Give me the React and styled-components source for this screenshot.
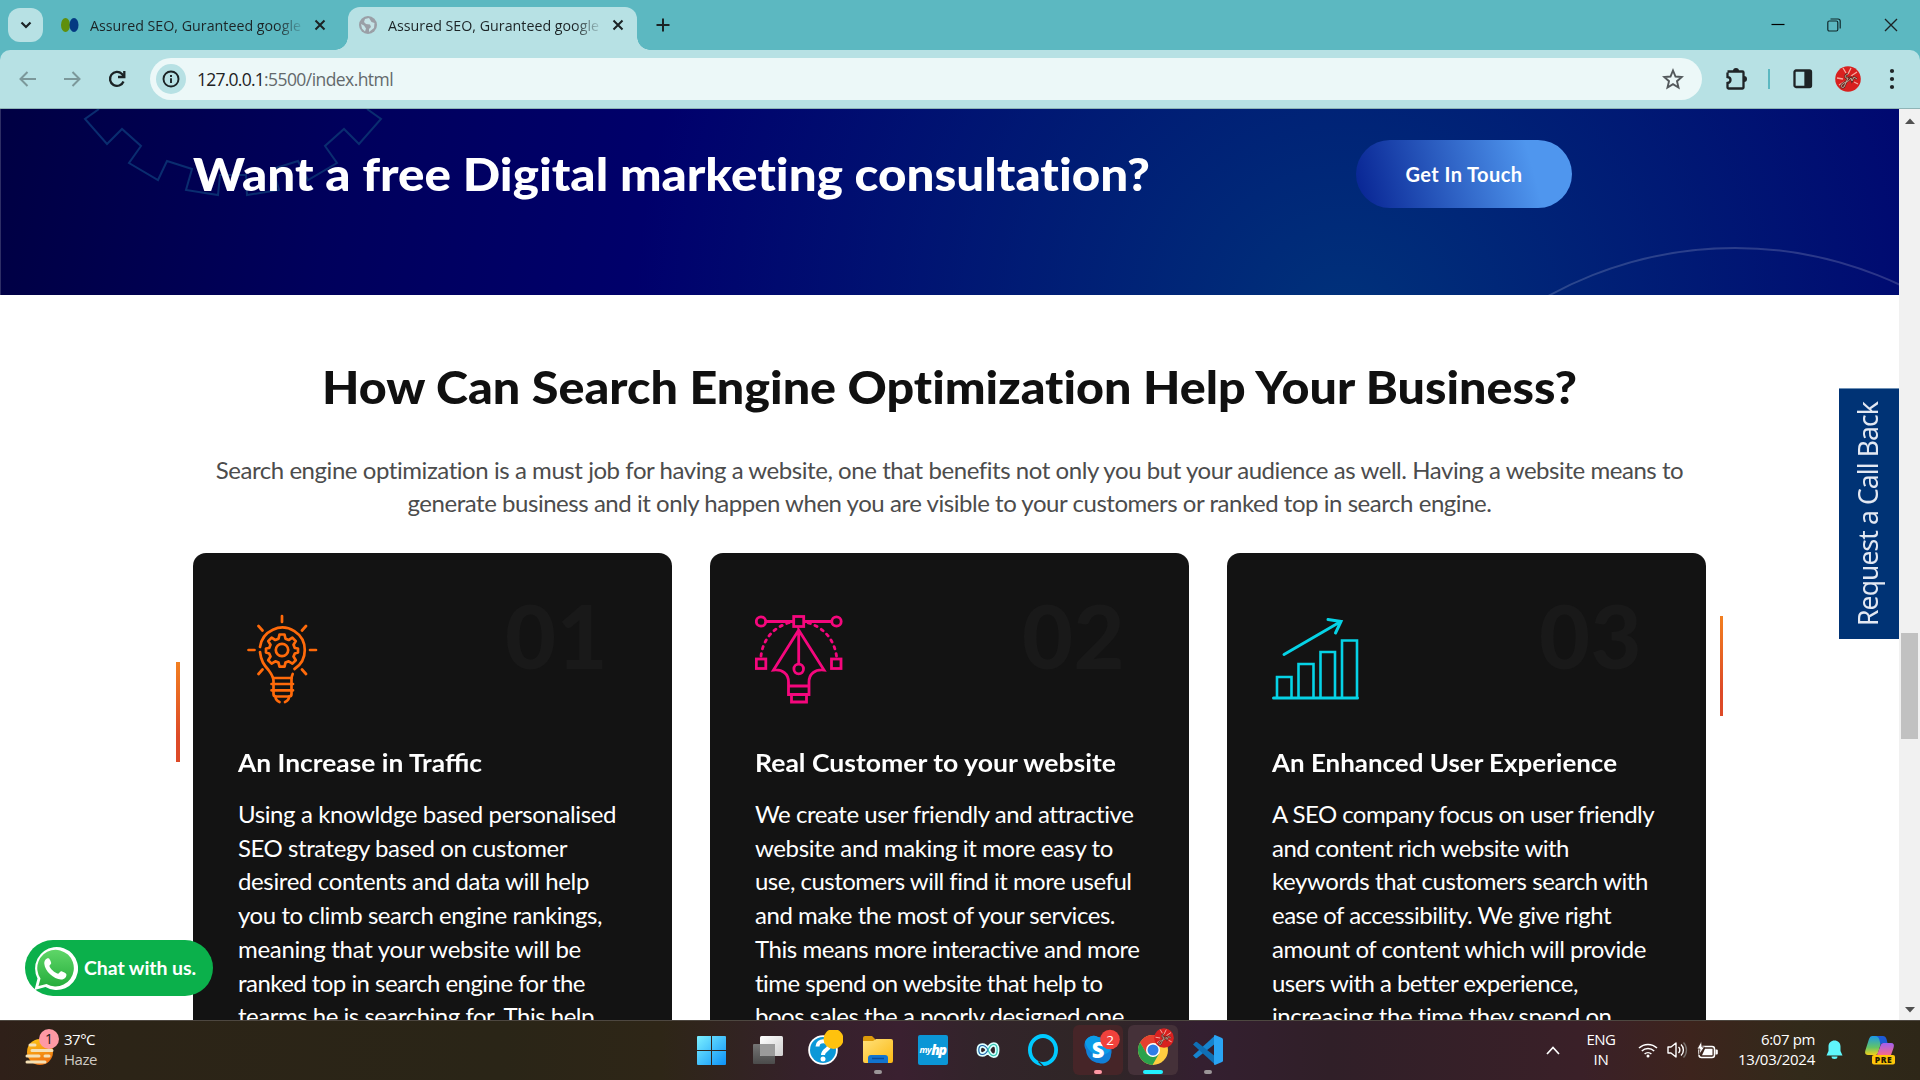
import React, { useLayoutEffect, useRef } from "react";
import styled, { createGlobalStyle } from "styled-components";

const Global = createGlobalStyle`
  * { box-sizing: border-box; }
  html, body { margin: 0; padding: 0; overflow: hidden; }
  body { width: 1920px; height: 1080px; font-family: Lato, "Liberation Sans", sans-serif; }
  h1, h2, h3, p { margin: 0; }
  h1, h2 { font-variant-ligatures: none; }
  svg { display: block; flex: none; }
`;

const UI = `"Open Sans", "Noto Sans", sans-serif`;

/* ---------- text set to a given width, by tracking or by widening the glyphs ---------- */
const FitSpan = styled.span`
  display: inline-block;
  white-space: nowrap;
  transform-origin: 0 50%;
`;
function Fit({ w, stretch, children }) {
  const ref = useRef(null);
  useLayoutEffect(() => {
    const el = ref.current;
    el.style.letterSpacing = "0px";
    el.style.transform = "none";
    el.style.width = "auto";
    const natural = el.getBoundingClientRect().width;
    if (stretch) {
      el.style.width = w + "px";
      el.style.transform = `scaleX(${w / natural})`;
    } else {
      el.style.letterSpacing = (w - natural) / el.textContent.length + "px";
    }
  }, [w, stretch, children]);
  return <FitSpan ref={ref}>{children}</FitSpan>;
}

/* ---------- browser chrome ---------- */
const Screen = styled.div`
  width: 1920px;
  height: 1080px;
  display: flex;
  flex-direction: column;
  background: #5cb8c1;
  overflow: hidden;
`;
const TabStrip = styled.div`
  height: 50px;
  display: flex;
  align-items: flex-end;
  padding-left: 8px;
`;
const TabSearch = styled.div`
  width: 35px;
  height: 34px;
  margin-bottom: 8px;
  border-radius: 12px;
  background: #b7e1e4;
  display: flex;
  align-items: center;
  justify-content: center;
`;
const Tab = styled.div`
  position: relative;
  width: 289px;
  height: 43px;
  margin-left: ${(p) => p.$ml}px;
  padding: 0 10px 7px 11px;
  display: flex;
  align-items: center;
  border-radius: 12px 12px 0 0;
  background: ${(p) => (p.$active ? "#b7e1e4" : "transparent")};
  ${(p) =>
    p.$active &&
    `&::before, &::after {
      content: ""; position: absolute; bottom: 0; width: 13px; height: 13px;
    }
    &::before { left: -13px; background: radial-gradient(circle at 0 0, transparent 12.5px, #b7e1e4 13px); }
    &::after { right: -13px; background: radial-gradient(circle at 100% 0, transparent 12.5px, #b7e1e4 13px); }`}
`;
const TabTitle = styled.div`
  flex: none;
  width: 212px;
  margin: 0 12px 0 11px;
  font: 400 15px/22px ${UI};
  color: #1c2426;
  mask-image: linear-gradient(90deg, #000 88%, rgba(0, 0, 0, 0.1) 100%);
`;
const NewTab = styled.div`
  height: 34px;
  margin: 0 0 8px 18px;
  display: flex;
  align-items: center;
`;
const WindowButtons = styled.div`
  margin: 0 21px 0 auto;
  height: 50px;
  display: flex;
  align-items: center;
  gap: 42px;
`;
const Toolbar = styled.div`
  height: 59px;
  display: flex;
  align-items: center;
  padding: 0 19px 1px 18px;
  background: #b7e1e4;
  border-bottom: 1px solid #8fb4b6;
  border-radius: 10px 10px 0 0;
`;
const NavIcons = styled.div`
  display: flex;
  gap: 24px;
  margin-right: 22px;
`;
const Omnibox = styled.div`
  width: 1552px;
  height: 42px;
  border-radius: 21px;
  background: #ecf8f8;
  display: flex;
  align-items: center;
  padding: 0 18px 0 6px;
`;
const InfoChip = styled.div`
  width: 30px;
  height: 30px;
  border-radius: 50%;
  background: #b7e1e4;
  display: flex;
  align-items: center;
  justify-content: center;
`;
const Url = styled.div`
  flex: 1;
  display: flex;
  margin-left: 11px;
  font: 400 17.5px/26px ${UI};
  color: #1e2224;
  em { font-style: normal; color: #63696c; }
`;
const ToolIcons = styled.div`
  flex: 1;
  display: flex;
  align-items: center;
  margin-left: 22px;
  justify-content: space-between;
`;
const ToolDivider = styled.div`
  width: 2px;
  height: 20px;
  margin: 0 1px 0 -2px;
  background: #5cb8c1;
`;

/* ---------- page ---------- */
const Viewport = styled.div`
  height: 911px;
  display: flex;
  background: #fff;
  overflow: hidden;
`;
const Page = styled.main`
  position: relative;
  width: 1899px;
  height: 911px;
  overflow: hidden;
`;
const Scrollbar = styled.div`
  width: 21px;
  display: flex;
  flex-direction: column;
  align-items: center;
  justify-content: space-between;
  padding: 9px 0 7px;
  background: #f1f1f1;
`;
const Thumb = styled.div`
  width: 17px;
  height: 106px;
  margin-top: 240px;
  background: #c1c1c1;
`;
const Banner = styled.section`
  position: relative;
  height: 186px;
  display: flex;
  align-items: flex-start;
  padding: 31px 0 0 193px;
  background:
    radial-gradient(circle 710px at 1345px 215px, #00327b 0%, rgba(0, 50, 123, 0) 100%),
    linear-gradient(100deg, #000043 0%, #00005c 18%, #00006c 36%, #00006e 100%);
`;
const BannerArt = styled.svg`
  position: absolute;
  left: 0;
  top: 0;
`;
const BannerTitle = styled.h1`
  position: relative;
  width: 1163px;
  font-size: 45px;
  font-weight: 900;
  line-height: 68px;
  color: #fff;
`;
const PillButton = styled.button`
  position: relative;
  width: 216px;
  height: 68px;
  padding: 0;
  border: 0;
  border-radius: 34px;
  font: 700 20px/26px Lato, sans-serif;
  color: #fff;
  background: linear-gradient(75deg, #0a2896 4%, #4f96ee 80%);
`;
const Help = styled.section`
  display: flex;
  flex-direction: column;
  align-items: center;
  padding-top: 58px;
`;
const HelpTitle = styled.h2`
  font-size: 45px;
  font-weight: 900;
  line-height: 68px;
  color: #101010;
`;
const Lead = styled.p`
  margin-top: 31.5px;
  display: flex;
  flex-direction: column;
  align-items: center;
  font-size: 24px;
  font-weight: 400;
  line-height: 33px;
  color: #4c4c4c;
`;
const Cards = styled.div`
  display: flex;
  gap: 38px;
  margin-top: 34.5px;
`;
const Card = styled.article`
  width: 479px;
  height: 620px;
  padding: 61px 45px 0;
  border-radius: 13px;
  background: #131313;
`;
const CardHead = styled.div`
  height: 128px;
  display: flex;
  justify-content: space-between;
  padding-right: 19px;
`;
const CardNumber = styled.div`
  margin-top: -32px;
  font-family: Lato, sans-serif;
  font-weight: 900;
  font-size: 88px;
  line-height: 106px;
  color: #191919;
`;
const CardTitle = styled.h3`
  margin-top: 3px;
  font-size: 25px;
  font-weight: 700;
  line-height: 34px;
  color: #fff;
`;
const CardText = styled.p`
  margin-top: 18px;
  display: flex;
  flex-direction: column;
  font-size: 24px;
  line-height: 33.7px;
  color: #fff;
`;
const AccentBar = styled.div`
  position: absolute;
  left: ${(p) => p.$x}px;
  top: ${(p) => p.$y}px;
  width: ${(p) => p.$w}px;
  height: 100px;
  background: linear-gradient(#f27f20, #dd4a28 75%);
`;
const CallBack = styled.div`
  position: absolute;
  right: 0;
  top: 279px;
  width: 60px;
  height: 251px;
  display: flex;
  align-items: center;
  justify-content: center;
  background: #003375;
  border-top: 1px solid #6f91b5;
`;
const CallLabel = styled.span`
  writing-mode: vertical-rl;
  transform: rotate(180deg);
  margin-right: 2px;
  color: #e3e8f2;
  font: 400 26.5px/36px "Noto Sans", sans-serif;
  letter-spacing: -0.9px;
`;
const Chat = styled.div`
  position: absolute;
  left: 25px;
  top: 831px;
  width: 188px;
  height: 56px;
  display: flex;
  align-items: center;
  gap: 6px;
  padding-left: 8px;
  border-radius: 28px;
  background: #0bb04b;
  color: #fff;
  font-size: 19.5px;
  font-weight: 700;
  line-height: 26px;
`;

/* ---------- taskbar ---------- */
const Taskbar = styled.footer`
  height: 60px;
  display: flex;
  align-items: center;
  padding-bottom: 1px;
  border-top: 1px solid #4d4740;
  font-family: ${UI};
  color: #fff;
  background: linear-gradient(90deg, #2f2019 0, #2c2417 120px, #2a2517 500px, #2e2617 660px, #35212a 800px,
    #3a2030 900px, #32242a 980px, #2f2626 1100px, #341f30 1200px, #301f28 1330px, #3a2028 1580px, #3d241d 1690px, #322a1a 1800px, #2e2718 1920px);
`;
const Weather = styled.div`
  width: 686px;
  display: flex;
  align-items: center;
  gap: 2px;
  padding-left: 24px;
`;
const TwoLines = styled.div`
  display: flex;
  flex-direction: column;
  align-items: ${(p) => p.$align || "flex-start"};
  width: ${(p) => (p.$w ? p.$w + "px" : "auto")};
  margin-bottom: 2px;
  font-size: 15px;
  line-height: 20px;
  small { font-size: 15px; color: ${(p) => p.$dim || "#fff"}; }
`;
const Apps = styled.div`
  display: flex;
  gap: 5px;
`;
const AppSlot = styled.div`
  position: relative;
  width: 50px;
  height: 50px;
  margin-right: ${(p) => p.$mr || 0}px;
  border-radius: 6px;
  display: flex;
  align-items: center;
  justify-content: center;
  background: ${(p) => p.$bg || "transparent"};
  &::after {
    content: "";
    position: absolute;
    bottom: 1px;
    left: 50%;
    height: 4px;
    border-radius: 2px;
    width: ${(p) => p.$markW || 0}px;
    margin-left: ${(p) => -(p.$markW || 0) / 2}px;
    background: ${(p) => p.$mark || "transparent"};
  }
`;
const Tray = styled.div`
  flex: 1;
  display: flex;
  align-items: center;
  padding-left: 313px;
`;
const TrayItem = styled.div`
  margin-left: ${(p) => p.$ml}px;
`;

/* ---------- icons ---------- */
const Cross = ({ s = 12, w = 2 }) => (
  <svg width={s} height={s} viewBox="0 0 12 12" stroke="#1b2325" strokeWidth={w}><path d="M1.5 1.5l9 9M10.5 1.5l-9 9" /></svg>
);
const Bulb = () => (
  <svg width="88" height="90" viewBox="0 0 88 90" fill="none" stroke="#ff6a0a" strokeWidth="2.7" strokeLinecap="round">
    <path d="M44 2v6M10.500 36h6M72 36h6M20.500 12l4 4.500M68 12l-4 4.500M20.500 60l4-4.500M68 60l-4-4.500" />
    <path d="M22 33a22.500 22.500 0 1 1 34.500 22M22 38c1 9 4 13 8.500 18 3 4 5 7 5 11v13c0 1.500 1 2.500 2.500 2.500h13c1.500 0 2.500-1 2.500-2.500V65c0-2 .300-3 1.200-5" />
    <path d="M35.500 64h18M33.500 70h21.500M33.500 76.300h21.500M37.500 82.500c0 3 1.500 4.500 4 5.500M51 82.500c0 3-1.500 4.500-4 5.500" />
    <circle cx="44" cy="36" r="6.200" />
    <path strokeLinejoin="round" d="M41.500 20.500h5l1 4.200 3.200 1.300 3.700-2.300 3.400 3.400-2.300 3.700 1.300 3.200 3.200.5v4l-3.200 1-1.300 3 2.300 3.700-3.400 3.400-3.700-2.300-3.200 1.300-1 4h-5l-1-4-3.200-1.300-3.700 2.300-3.400-3.400 2.300-3.700-1.300-3-3.200-1v-4l3.200-.5 1.300-3.200-2.300-3.700 3.400-3.400 3.700 2.300 3.200-1.300z" />
  </svg>
);
const Pen = () => (
  <svg width="88" height="90" viewBox="0 0 88 90" fill="none" stroke="#f5077d" strokeWidth="2.800">
    <circle cx="6" cy="7.500" r="4.700" /><circle cx="81.500" cy="7.500" r="4.700" />
    <path d="M11 7.500h27M49.500 7.500h27" />
    <rect x="38.700" y="2.500" width="10" height="10" />
    <rect x="1.300" y="45" width="9.500" height="9.500" /><rect x="76.500" y="45" width="9.500" height="9.500" />
    <path strokeDasharray="2.400 4.900" strokeLinecap="round" d="M6 42C8 25 19 12 37 8M81.500 42C79 25 68 12 50 8" />
    <path d="M43.700 16L18.500 56c9-1 15 4 15 12V80.500h20.500V68c0-8 6-13 15-12L43.700 16v34M33.500 72H54M36.500 80.500v7.500h15V80.500" />
    <circle cx="43.700" cy="55" r="4.800" />
  </svg>
);
const Chart = () => (
  <svg width="88" height="90" viewBox="0 0 88 90" fill="none" stroke="#06d3e6" strokeWidth="2.600">
    <path strokeLinecap="round" d="M1.500 84h84M12 40.500L68 8M56 5.500L69 7.500 63.500 19" strokeWidth="3" />
    <path d="M5 84V63h14.500v21M26.500 84V50H41.500v34M48.500 84V38h14.500v46M70 84V26.500h15V84" />
  </svg>
);
const WhatsApp = () => (
  <svg width="45" height="45" viewBox="0 0 45 45">
    <defs><linearGradient id="wa" x1="0" y1="0" x2="0" y2="1"><stop offset="0" stopColor="#5fd668" /><stop offset="1" stopColor="#25ad3c" /></linearGradient></defs>
    <path fill="#fff" d="M1.500 44l3-11.500A21.500 21.500 0 1 1 12.500 41z" />
    <path fill="url(#wa)" d="M5.500 40l2-7.500A18.300 18.300 0 1 1 13.500 38z" />
    <path fill="#fff" d="M16 12.500c-1.500-1.200-5 1-4.700 5.200.5 7.300 9.500 15.500 16.700 15.800 3.500.1 6-2.700 5.300-5.500-.1-.8-4.500-2.900-5.300-2.800-1 .1-2 2.600-2.900 2.500-3.300-.5-8-5-8.700-7.600-.2-.9 1.700-1.900 1.800-2.900.1-.7-1.400-4.100-2.200-4.700z" />
  </svg>
);
const Arrow = ({ flip }) => (
  <svg width="20" height="20" viewBox="0 0 20 20" fill="none" stroke="#7c989a" strokeWidth="2"><path d={flip ? "M2 10h15M10.500 3l7 7-7 7" : "M18 10H3M9.500 3l-7 7 7 7"} /></svg>
);
const Avatar = ({ s }) => (
  <svg width={s} height={s} viewBox="0 0 26 26">
    <circle cx="13" cy="13" r="12.800" fill="#d8201f" />
    <path stroke="#f5a9a0" strokeWidth="1.300" d="M8 2l3 5M16 2l-3 6M22 6l-6 4M2 12l6 1M4 19l5-3M23 18l-4-2" />
    <path fill="none" stroke="#5e2a25" strokeWidth="2.200" d="M13 8c-4 1-3 5 0 4l-4 9c-3 2-4-2 0-4 4-2 5-2 7-5l1 3 2-4 3 2" />
    <path fill="none" stroke="#c8b2a0" strokeWidth=".9" d="M13 8c-4 1-3 5 0 4l-4 9c-3 2-4-2 0-4 4-2 5-2 7-5l1 3 2-4 3 2" />
  </svg>
);
const SunIcon = () => (
  <svg width="38" height="44" viewBox="0 0 38 44">
    <defs><linearGradient id="sun" x1="0" y1="0" x2=".3" y2="1"><stop offset="0" stopColor="#ffc814" /><stop offset="1" stopColor="#ee7310" /></linearGradient></defs>
    <circle cx="16" cy="24" r="13" fill="url(#sun)" />
    <path stroke="#f4e0b4" strokeWidth="3" strokeLinecap="round" d="M6 17h5M8 22.500h20M3 28h12M21 28h4M3 34h18" />
    <circle cx="25" cy="11" r="10" fill="#ff99a4" />
    <text x="25" y="16.300" textAnchor="middle" fontFamily="Open Sans, sans-serif" fontSize="14" fill="#20181a">1</text>
  </svg>
);
const WindowsIcon = () => (
  <svg width="29" height="29" viewBox="0 0 29 29">
    <defs><linearGradient id="win" x1="0" y1="0" x2="1" y2="1"><stop offset="0" stopColor="#7cf0ff" /><stop offset="1" stopColor="#0c92f8" /></linearGradient></defs>
    <path fill="url(#win)" d="M0 1q0-1 1-1h13v14H0zM15 0h13q1 0 1 1v13H15zM0 15h14v14H1q-1 0-1-1zM15 15h14v13q0 1-1 1H15z" />
  </svg>
);
const TaskView = () => (
  <svg width="32" height="30" viewBox="0 0 32 30">
    <defs>
      <linearGradient id="tv" x1="0" y1="0" x2="1" y2="1"><stop offset="0" stopColor="#fff" /><stop offset="1" stopColor="#cfcfcf" /></linearGradient>
      <linearGradient id="tw" x1="0" y1="0" x2="0" y2="1"><stop offset="0" stopColor="#757575" /><stop offset="1" stopColor="#4b4b4b" /></linearGradient>
    </defs>
    <rect x="1" y="9" width="22" height="20" rx="1" fill="url(#tw)" /><rect x="8" y="1" width="23" height="20" rx="1.500" fill="url(#tv)" />
    <path fill="#9b9b9b" d="M8 9h15v12H9.500Q8 21 8 19.500z" />
  </svg>
);
const HelpIcon = () => (
  <svg width="40" height="40" viewBox="-2 0 40 40">
    <circle cx="18" cy="20" r="14.800" fill="#fff" /><circle cx="18" cy="20" r="13" fill="#0b98d8" />
    <path fill="none" stroke="#fff" strokeWidth="4" d="M12.500 16.500c0-7 11.500-7 11.500-.5 0 4-6 4-6 9" /><circle cx="18" cy="29" r="2.500" fill="#fff" />
    <circle cx="28.500" cy="9" r="10" fill="#ffc20e" />
  </svg>
);
const FolderIcon = () => (
  <svg width="30" height="30" viewBox="0 0 30 30">
    <defs><linearGradient id="fo" x1="0" y1="0" x2="1" y2="1"><stop offset="0" stopColor="#ffe17a" /><stop offset="1" stopColor="#fcb913" /></linearGradient></defs>
    <path fill="#dc9a0a" d="M0 3q0-2 2-2h7l3 3v6H0z" /><path fill="url(#fo)" d="M0 6h10l3-2h15q2 0 2 2v20q0 2-2 2H2q-2 0-2-2z" />
    <path fill="#1274cf" d="M5 28v-5q0-3 3-3h14q3 0 3 3v5z" /><path stroke="#0b4b98" strokeWidth="1.500" d="M9 23.500h12" />
  </svg>
);
const MyHp = styled.div`
  width: 30px;
  height: 30px;
  border-radius: 2px;
  background: #0b96d6;
  display: flex;
  align-items: center;
  justify-content: center;
  font: italic 700 9px/30px "Open Sans", sans-serif;
  color: #fff;
  letter-spacing: -0.6px;
  b { font-size: 14px; letter-spacing: -1.5px; padding-right: 1px; }
`;
const Infinity = () => (
  <svg width="24" height="22" viewBox="0 0 24 22" fill="none">
    <path stroke="#dff" strokeWidth="4.500" d="M12 11C9 5 2.800 5 2.800 11S9 17 12 11c3-7.500 9.200-7.500 9.200 0s-6.200 7.500-9.200 0z" />
    <path stroke="#1b63a8" strokeWidth="1.200" d="M12 11C9 5 2.800 5 2.800 11S9 17 12 11" /><path stroke="#35c9b4" strokeWidth="1.200" d="M12 11c3-7.500 9.200-7.500 9.200 0s-6.200 7.500-9.200 0z" />
  </svg>
);
const Alexa = () => (
  <svg width="30" height="34" viewBox="0 -2 30 34"><ellipse cx="15" cy="15" rx="13.100" ry="14" fill="none" stroke="#00caff" strokeWidth="3.800" /><path stroke="#2f2626" strokeWidth="1.200" d="M10.500 26.500l5 5" /></svg>
);
const Skype = () => (
  <svg width="44" height="44" viewBox="-1 0 44 44">
    <path fill="#1180d8" d="M8 14a9 9 0 0 1 13-5 14 14 0 0 1 13 18 9 9 0 0 1-12 8A14 14 0 0 1 9 22a9 9 0 0 1-1-8z" />
    <path fill="#0b9ce8" d="M8 14a9 9 0 0 1 13-5c8 1 13 8 12 14-9 9-22 3-25-9z" />
    <text x="21" y="30" textAnchor="middle" fontFamily="Open Sans, sans-serif" fontWeight="800" fontSize="22" fill="#fff">S</text>
    <circle cx="33" cy="11.500" r="9.800" fill="#f0413c" />
    <text x="33" y="16.500" textAnchor="middle" fontFamily="Open Sans, sans-serif" fontSize="13.500" fill="#fff">2</text>
  </svg>
);
const ChromeBox = styled.div`
  position: relative;
  display: flex;
`;
const ChromeBadge = styled.div`
  position: absolute;
  left: 16px;
  top: -7px;
`;
const Chrome = () => (
  <ChromeBox>
    <svg width="30" height="30" viewBox="0 0 30 30">
      <circle cx="15" cy="15" r="15" fill="#ffcd40" />
      <path fill="#e6402f" d="M2 7.500A15 15 0 0 1 28 7.500L15 8.200 8.500 18.500z" />
      <path fill="#2ba24c" d="M2 7.500A15 15 0 0 0 14.500 30L21 18.700 15 22 8.700 18.500z" />
      <circle cx="15" cy="15" r="7" fill="#fff" /><circle cx="15" cy="15" r="5.500" fill="#2f7de6" />
    </svg>
    <ChromeBadge><Avatar s={20} /></ChromeBadge>
  </ChromeBox>
);
const VSCode = () => (
  <svg width="30" height="30" viewBox="0 0 30 30">
    <path fill="#1684cf" d="M22 .5L0 20.500l2.500 2.500q.7.500 1.500 0L23 8z" /><path fill="#0f6fb5" d="M22 29.500L0 9.500 2.500 7q.7-.5 1.500 0L23 22z" />
    <path fill="#2aa4f4" d="M22 0l7 3q1 .5 1 1.500v21q0 1-1 1.500l-7 3q-1 0-1-1V1q0-1 1-1z" />
  </svg>
);
const Copilot = () => (
  <svg width="30" height="30" viewBox="0 0 30 30">
    <defs>
      <linearGradient id="cp1" x1="0" y1="0" x2="0" y2="1"><stop offset="0" stopColor="#1b9ae8" /><stop offset=".6" stopColor="#63c466" /><stop offset="1" stopColor="#f2cf1b" /></linearGradient>
      <linearGradient id="cp2" x1="0" y1="0" x2="0" y2="1"><stop offset="0" stopColor="#a060f0" /><stop offset="1" stopColor="#f66a8c" /></linearGradient>
    </defs>
    <path fill="url(#cp1)" d="M7 1h11l-5 17q-.5 2-2.500 2H3q-4 0-2.500-5L4 4q1-3 3-3z" /><path fill="#1d5bd6" d="M10 1h8q2.500 0 3.500 3l1 4h-4q-2 0-3 2l-1-5q-1-4-4.500-4z" />
    <path fill="url(#cp2)" d="M18.500 8H26q4 0 2.500 5L26 20H12l3-8q1-4 3.500-4z" />
    <rect x="7" y="20" width="23" height="9.500" rx="2" fill="#ffc60a" />
    <text x="18.500" y="28" textAnchor="middle" fontFamily="Open Sans, sans-serif" fontWeight="800" fontSize="8.500" letterSpacing=".5" fill="#231a00">PRE</text>
  </svg>
);

const cards = [
  {
    no: "01", Icon: Bulb, title: ["An Increase in Traffic", 244],
    lines: [["Using a knowldge based personalised", 378], ["SEO strategy based on customer", 329], ["desired contents and data will help", 351],
      ["you to climb search engine rankings,", 364], ["meaning that your website will be", 343], ["ranked top in search engine for the", 347], ["tearms he is searching for. This help", 356]],
  },
  {
    no: "02", Icon: Pen, title: ["Real Customer to your website", 361],
    lines: [["We create user friendly and attractive", 378], ["website and making it more easy to", 358], ["use, customers will find it more useful", 376],
      ["and make the most of your services.", 360], ["This means more interactive and more", 385], ["time spend on website that help to", 348], ["boos sales the a poorly designed one.", 374]],
  },
  {
    no: "03", Icon: Chart, title: ["An Enhanced User Experience", 345],
    lines: [["A SEO company focus on user friendly", 382], ["and content rich website with", 297], ["keywords that customers search with", 376],
      ["ease of accessibility. We give right", 339], ["amount of content which will provide", 374], ["users with a better experience,", 305], ["increasing the time they spend on", 340]],
  },
];

export default function App() {
  return (
    <Screen>
      <Global />
      <TabStrip>
        <TabSearch>
          <svg width="12" height="8" viewBox="0 0 12 8" fill="none" stroke="#1b2325" strokeWidth="2.200"><path d="M1.500 1.500L6 6l4.500-4.500" /></svg>
        </TabSearch>
        <Tab $ml={7}>
          <svg width="18" height="18" viewBox="1 0 18 18"><ellipse cx="5.500" cy="9" rx="4.500" ry="7" fill="#5f8f0c" /><ellipse cx="14" cy="9" rx="4.500" ry="7" fill="#043a82" /></svg>
          <TabTitle><Fit stretch w={211}>Assured SEO, Guranteed google</Fit></TabTitle>
          <Cross />
        </Tab>
        <Tab $active $ml={9}>
          <svg width="18" height="18" viewBox="0 0 18 18"><circle cx="9" cy="9" r="9" fill="#9a9fa6" /><path fill="#c5e3e6" d="M10 2l-4 1-1 3 2 2 4 .5 1 2.500-2 2v3l5-4 .5-5-3-1zM2 8l3 1.500 2 3-1 3-3-3z" /></svg>
          <TabTitle><Fit stretch w={211}>Assured SEO, Guranteed google</Fit></TabTitle>
          <Cross />
        </Tab>
        <NewTab><svg width="16" height="16" viewBox="0 0 16 16" stroke="#1b2325" strokeWidth="2"><path d="M8 1.500v13M1.500 8h13" /></svg></NewTab>
        <WindowButtons>
          <svg width="14" height="14" viewBox="0 0 14 14"><path stroke="#000" strokeWidth="1.200" d="M.5 6.500h13" /></svg>
          <svg width="14" height="14" viewBox="0 0 14 14" fill="none" stroke="#10282b" strokeWidth="1.200"><rect x=".8" y="3" width="10" height="10" rx="1.500" /><path d="M3.500 1h7.500q2.200 0 2.200 2.200V10.500" /></svg>
          <Cross s={16} w={1} />
        </WindowButtons>
      </TabStrip>
      <Toolbar>
        <NavIcons>
          <Arrow /><Arrow flip />
          <svg width="22" height="20" viewBox="0 0 22 20" fill="none" stroke="#1b2325" strokeWidth="2.300"><path d="M17.500 12.500a7 7 0 1 1-1.500-7.500l2 2.500" /><path d="M18.300 2v6H12" /></svg>
        </NavIcons>
        <Omnibox>
          <InfoChip><svg width="18" height="18" viewBox="0 0 18 18" fill="none" stroke="#1b2325" strokeWidth="1.900"><circle cx="9" cy="9" r="7.500" /><path d="M9 8.200V13M9 5v1.900" /></svg></InfoChip>
          <Url><Fit w={67}>127.0.0.1</Fit><em><Fit w={129}>:5500/index.html</Fit></em></Url>
          <svg width="22" height="22" viewBox="0 0 22 22" fill="none" stroke="#53595c" strokeWidth="1.900"><path d="M11 2.500l2.500 6 6.300.5-4.800 4.200 1.500 6.300L11 16.200l-5.500 3.300L7 13.200 2.200 9l6.300-.5z" /></svg>
        </Omnibox>
        <ToolIcons>
          <svg width="24" height="24" viewBox="0 0 24 24" fill="none" stroke="#1f2426" strokeWidth="2.300"><path d="M3.500 4.500h15q1 0 1 1v15q0 1-1 1h-14q-1 0-1-1v-4.500c4-.5 4-5.500 0-6V5.500" /><path fill="#1f2426" stroke="none" d="M9 4a3 3 0 0 1 6 0zM20 9a3 3 0 0 1 0 6z" /></svg>
          <ToolDivider />
          <svg width="20" height="20" viewBox="0 0 20 20" fill="none" stroke="#1f2426" strokeWidth="2.300"><rect x="1.500" y="1.500" width="16.500" height="16.500" rx="1.500" /><path fill="#1f2426" d="M12.500 2.500h4.500v14.500h-4.500z" /></svg>
          <Avatar s={26} />
          <svg width="18" height="22" viewBox="0 0 18 22" fill="#1f2426"><circle cx="9" cy="3" r="2.100" /><circle cx="9" cy="11" r="2.100" /><circle cx="9" cy="19" r="2.100" /></svg>
        </ToolIcons>
      </Toolbar>

      <Viewport>
        <Page>
          <Banner>
            <BannerArt width="1899" height="186" viewBox="0 109 1899 186" fill="none">
              <path stroke="#0a2d70" strokeWidth="2" d="M99 109L85 119l22 25 15-15 19 17-12 17 29 17 9-19 25 8-6 21 32 5 2-20h26l1 20 32-5-6-21 25-8 10 19 29-17-12-17 19-17 15 15 22-25-14-10" />
              <circle cx="1735" cy="635" r="387" stroke="#fff" strokeOpacity=".17" strokeWidth="2" />
              <path d="M.5 109v186" stroke="#fff" strokeOpacity=".18" />
            </BannerArt>
            <BannerTitle><Fit stretch w={957}>Want a free Digital marketing consultation?</Fit></BannerTitle>
            <PillButton><Fit w={117}>Get In Touch</Fit></PillButton>
          </Banner>
          <Help>
            <HelpTitle><Fit stretch w={1255}>How Can Search Engine Optimization Help Your Business?</Fit></HelpTitle>
            <Lead>
              <Fit w={1468}>Search engine optimization is a must job for having a website, one that benefits not only you but your audience as well. Having a website means to</Fit>
              <Fit w={1084}>generate business and it only happen when you are visible to your customers or ranked top in search engine.</Fit>
            </Lead>
            <Cards>
              {cards.map(({ no, Icon, title, lines }) => (
                <Card key={no}>
                  <CardHead><Icon /><CardNumber><Fit w={103}>{no}</Fit></CardNumber></CardHead>
                  <CardTitle><Fit stretch w={title[1]}>{title[0]}</Fit></CardTitle>
                  <CardText>{lines.map(([t, w]) => <div key={t}><Fit w={w}>{t}</Fit></div>)}</CardText>
                </Card>
              ))}
            </Cards>
          </Help>
          <AccentBar $x={176} $y={553} $w={4} />
          <AccentBar $x={1720} $y={507} $w={3} />
          <CallBack><CallLabel>Request a Call Back</CallLabel></CallBack>
          <Chat><WhatsApp /><Fit w={112}>Chat with us.</Fit></Chat>
        </Page>
        <Scrollbar>
          <svg width="10" height="6" viewBox="0 0 10 6"><path fill="#505050" d="M0 6l5-5.500L10 6z" /></svg>
          <Thumb />
          <svg width="10" height="6" viewBox="0 0 10 6"><path fill="#505050" d="M0 0l5 5.500L10 0z" /></svg>
        </Scrollbar>
      </Viewport>

      <Taskbar>
        <Weather><SunIcon /><TwoLines $dim="#cfcac4"><Fit w={31}>37°C</Fit><small><Fit w={33}>Haze</Fit></small></TwoLines></Weather>
        <Apps>
          <AppSlot $mr={2}><WindowsIcon /></AppSlot>
          <AppSlot><TaskView /></AppSlot>
          <AppSlot><HelpIcon /></AppSlot>
          <AppSlot $mark="#9b9598" $markW={8}><FolderIcon /></AppSlot>
          <AppSlot><MyHp>my<b>hp</b></MyHp></AppSlot>
          <AppSlot><Infinity /></AppSlot>
          <AppSlot><Alexa /></AppSlot>
          <AppSlot $bg="#462528" $mark="#ff99a4" $markW={8}><Skype /></AppSlot>
          <AppSlot $bg="#453139" $mark="#23f0ff" $markW={20}><Chrome /></AppSlot>
          <AppSlot $mark="#9b9598" $markW={8}><VSCode /></AppSlot>
        </Apps>
        <Tray>
          <svg width="14" height="9" viewBox="0 0 14 9" fill="none" stroke="#fff" strokeWidth="1.700"><path d="M1 8l6-6.500L13 8" /></svg>
          <TrayItem $ml={25}><TwoLines $align="center" $w={32}><Fit w={29}>ENG</Fit><Fit w={15}>IN</Fit></TwoLines></TrayItem>
          <TrayItem $ml={21}>
            <svg width="20" height="16" viewBox="0 0 20 16" fill="none" stroke="#fff" strokeWidth="1.500"><path d="M1 6a13 13 0 0 1 18 0M3.800 9a9 9 0 0 1 12.400 0M6.600 12a5 5 0 0 1 6.800 0" /><circle cx="10" cy="14" r="1.500" fill="#fff" stroke="none" /></svg>
          </TrayItem>
          <TrayItem $ml={9}>
            <svg width="21" height="18" viewBox="0 0 21 18" fill="none" stroke="#fff" strokeWidth="1.400"><path strokeLinejoin="round" d="M1 6h3l5-4v14l-5-4H1z" /><path d="M11.500 6a4 4 0 0 1 0 6M14 3.500a7.500 7.500 0 0 1 0 11" /><path stroke="#77706c" d="M16.500 1.500a11 11 0 0 1 0 15" /></svg>
          </TrayItem>
          <TrayItem $ml={9}>
            <svg width="21" height="18" viewBox="0 0 21 18"><rect x="2" y="5.500" width="15.500" height="11" rx="2.500" fill="none" stroke="#fff" strokeWidth="1.500" /><path fill="#fff" d="M18.500 8.500h1.300q1 0 1 1v3q0 1-1 1h-1.300zM8 7.800h7.500v6.500H5z" /><path fill="#fff" stroke="#3d241d" strokeWidth=".8" d="M4.500 0L0 8h3l-1 6 5.500-8H5z" /></svg>
          </TrayItem>
          <TrayItem $ml={19}><TwoLines $align="flex-end" $w={78}><Fit w={54}>6:07 pm</Fit><Fit w={77}>13/03/2024</Fit></TwoLines></TrayItem>
          <TrayItem $ml={11}>
            <svg width="17" height="20" viewBox="0 0 17 20" fill="#5ff6fb"><path d="M8.500.5C5 .5 2.500 3 2.500 6.500V11L.5 15.500h16L14.500 11V6.500C14.500 3 12 .5 8.500.5zM5.500 16.500h6a3 2.500 0 0 1-6 0z" /></svg>
          </TrayItem>
          <TrayItem $ml={22}><Copilot /></TrayItem>
        </Tray>
      </Taskbar>
    </Screen>
  );
}
